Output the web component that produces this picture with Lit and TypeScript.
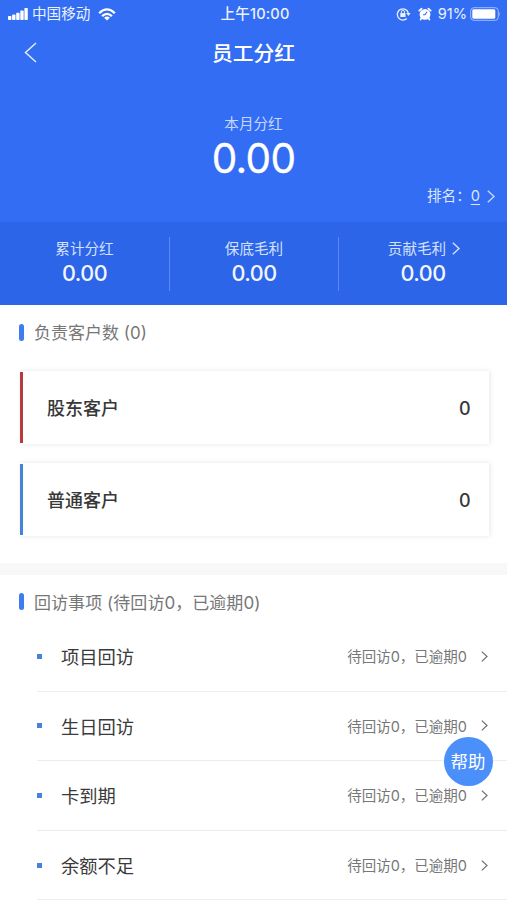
import { LitElement, html, css } from "lit";
import { customElement, property } from "lit/decorators.js";

@customElement("chevron-icon")
class ChevronIcon extends LitElement {
  static styles = css`
    :host { display: block; width: 8px; height: 13px; }
    .icon { display: block; width: 100%; height: 100%; fill: none; stroke: currentColor; stroke-width: 1.4; overflow: visible; }
  `;
  render() {
    return html`<svg class="icon" viewBox="0 0 8 13"><path d="M0.8 0.8 L7 6.5 L0.8 12.2" /></svg>`;
  }
}

@customElement("status-bar")
class StatusBar extends LitElement {
  static styles = css`
    :host { display: grid; grid-template-columns: 1fr auto 1fr; align-items: center; height: 27px; padding: 0 6px 0 8px; color: #eaf1ff; font-size: 14.6px; line-height: 27px; }
    .side { display: flex; align-items: center; }
    .right { justify-content: flex-end; }
    .signal { width: 20px; height: 12px; margin-right: 4px; }
    .wifi { width: 18px; height: 13px; margin-left: 8px; }
    .lock { width: 15px; height: 14px; margin-right: 7px; }
    .alarm { width: 14px; height: 14px; margin-right: 6px; }
    .battery { width: 31px; height: 14px; margin-left: 3px; }
    .time { padding: 1px 0 0 1px; font-weight: 500; letter-spacing: 0.15px; }
    .percent { font-size: 14.6px; }
  `;
  render() {
    return html`
      <div class="side">
        <svg class="signal" viewBox="0 0 20 12" fill="#fff">
          <rect x="0" y="8" width="3.4" height="4" rx="0.8" /><rect x="4.1" y="6.5" width="3.4" height="5.5" rx="0.8" />
          <rect x="8.2" y="4.7" width="3.4" height="7.3" rx="0.8" /><rect x="12.3" y="2.5" width="3.4" height="9.5" rx="0.8" />
          <rect x="16.4" y="0" width="3.4" height="12" rx="0.8" />
        </svg>
        <span>中国移动</span>
        <svg class="wifi" viewBox="0 0 18 13" fill="none" stroke="#fff" stroke-width="2.3">
          <path d="M1.2 5.2 Q9 -2.4 16.8 5.2" /><path d="M4.1 8.2 Q9 3.6 13.9 8.2" />
          <path d="M9 12.6 L6.1 9.8 Q9 7.2 11.9 9.8 Z" fill="#fff" stroke="none" />
        </svg>
      </div>
      <span class="time">上午10:00</span>
      <div class="side right">
        <svg class="lock" viewBox="0 0 15 14" fill="none" stroke="#eaf1ff" stroke-width="1.3">
          <path d="M10.8 11.5 A5.6 5.6 0 1 1 12.3 6" /><path d="M10.2 6 L14.6 6 L12.4 9 Z" fill="#eaf1ff" stroke="none" />
          <rect x="4.3" y="6.1" width="5.2" height="3.9" fill="#eaf1ff" stroke="none" /><path d="M5.3 6.5 V5 a1.6 1.6 0 0 1 3.2 0 V6.5" stroke-width="1" />
        </svg>
        <svg class="alarm" viewBox="0 0 14 14">
          <circle cx="7" cy="7.4" r="5.4" fill="#fff" />
          <path d="M1.3 3.6 L3.6 1.6 M12.7 3.6 L10.4 1.6 M3.5 11.3 L2.6 12.6 M10.5 11.3 L11.4 12.6" stroke="#fff" stroke-width="1.7" stroke-linecap="round" />
          <path d="M9 4.8 L7 7.8 L5 7.8" fill="none" stroke="#336df3" stroke-width="1.1" />
        </svg>
        <span class="percent">91%</span>
        <svg class="battery" viewBox="0 0 31 14">
          <rect x="0.7" y="0.7" width="27.6" height="12.6" rx="3.2" fill="none" stroke="#9fbdff" stroke-width="1" />
          <rect x="2.3" y="2.3" width="23" height="9.4" rx="1.4" fill="#fff" />
          <path d="M29.4 4.8 Q31 7 29.4 9.2 Z" fill="#9fbdff" />
        </svg>
      </div>`;
  }
}

@customElement("customer-card")
class CustomerCard extends LitElement {
  @property() label = "";
  @property() count = "0";
  @property() tone = "red";
  static styles = css`
    .card { display: flex; align-items: center; box-sizing: border-box; height: 73px; padding-right: 18.5px; background: #fff; box-shadow: 1px 0 5px rgba(0, 0, 0, 0.1); color: #383838; font-size: 18px; font-weight: 500; line-height: 26px; }
    .bar { width: 2.5px; height: 71px; margin-right: 24.5px; background: #b63c3c; }
    .bar.blue { background: #4583d8; }
    .label { flex: 1; padding-top: 3px; }
    .count { padding-top: 2px; font-size: 18px; }
  `;
  render() {
    return html`<div class="card"><i class="bar ${this.tone}"></i><span class="label">${this.label}</span><span class="count">${this.count}</span></div>`;
  }
}

@customElement("visit-row")
class VisitRow extends LitElement {
  @property() label = "";
  static styles = css`
    .row { display: flex; align-items: center; box-sizing: border-box; height: 69.6px; margin-left: 37px; padding-right: 19px; border-bottom: 1.5px solid #ededed; color: #777; font-size: 14.5px; line-height: 26px; }
    .dot { width: 5px; height: 5px; margin-right: 19px; background: #4583d8; }
    .label { flex: 1; padding-top: 2px; color: #3a3a3a; font-size: 18.3px; }
    .detail { padding-top: 2px; }
    .chevron { margin-left: 14px; width: 7px; height: 11px; color: #707070; }
  `;
  render() {
    return html`<div class="row"><i class="dot"></i><span class="label">${this.label}</span><span class="detail">待回访0，已逾期0</span><chevron-icon class="chevron"></chevron-icon></div>`;
  }
}

@customElement("app-root")
class AppRoot extends LitElement {
  static styles = css`
    :host { display: block; position: relative; width: 507px; height: 900px; overflow: hidden; background: #fff; font-family: Inter, "Noto Sans CJK SC", sans-serif; }
    .hero { display: flex; flex-direction: column; height: 222px; background: #336df3; color: #fff; }
    .nav { display: grid; grid-template-columns: 1fr auto 1fr; align-items: center; height: 50px; padding: 0 24px; }
    .back { width: 13px; height: 21px; fill: none; stroke: #e4edff; stroke-width: 1.5; }
    .title { padding-top: 3px; font-size: 20.8px; font-weight: 500; line-height: 47px; }
    .caption { margin-top: 36px; text-align: center; font-size: 14.6px; line-height: 22px; color: #c6d8ff; }
    .amount { text-align: center; font-size: 40.5px; line-height: 48px; letter-spacing: -0.7px; font-weight: 400; -webkit-text-stroke: 0.3px #fff; }
    .rank { display: flex; justify-content: flex-end; align-items: center; margin-top: 2px; padding-right: 12px; font-size: 14.6px; line-height: 22px; color: #dbe6ff; }
    .rank-value { text-decoration: underline; text-underline-offset: 3px; }
    .rank-chevron { margin-left: 7px; color: #c6d8ff; }
    .stats { display: grid; grid-template-columns: repeat(3, 1fr); align-items: center; height: 83px; background: #2c65e7; color: #d3e1ff; }
    .stat { display: flex; flex-direction: column; align-items: center; box-sizing: border-box; height: 54px; font-size: 14.6px; }
    .stat + .stat { border-left: 1px solid #5989f3; }
    .stat-name { display: flex; align-items: center; padding-top: 1px; line-height: 22px; }
    .stat-name.linked { margin-left: 2px; }
    .stat-chevron { margin-left: 6px; }
    .stat-value { color: #f2f6ff; font-size: 21.6px; font-weight: 500; line-height: 26px; letter-spacing: -0.5px; }
    .heading { display: flex; align-items: center; height: 54px; padding-left: 19px; font-size: 17px; color: #777; }
    .heading-text { margin-top: -2px; }
    .heading.visits { height: 43px; padding-top: 4px; }
    .mark { width: 5px; height: 17px; margin-right: 10px; border-radius: 2.5px; background: #3e7df0; }
    .cards { display: flex; flex-direction: column; gap: 19px; height: 191.5px; padding: 12px 18px 0 20px; box-sizing: border-box; }
    .band { height: 12.5px; background: #f8f8f8; margin-top: 12px; }
    .visits .mark { margin-top: 2px; }
    .visits .heading-text { margin-top: 2px; letter-spacing: 0.05px; }
    .help { position: absolute; left: 443.5px; top: 736.5px; width: 49px; height: 49px; border-radius: 50%; background: #4b8ffa; color: #fff; text-align: center; font-size: 17.4px; line-height: 50px; white-space: nowrap; }
  `;
  render() {
    const chevron = (cls: string) => html`<chevron-icon class=${cls}></chevron-icon>`;
    return html`
      <header class="hero">
        <status-bar></status-bar>
        <nav class="nav">
          <svg class="back" viewBox="0 0 13 21"><path d="M12 1 L1.5 10.5 L12 20" /></svg>
          <span class="title">员工分红</span>
        </nav>
        <div class="caption">本月分红</div>
        <div class="amount">0.00</div>
        <div class="rank"><span>排名：</span><span class="rank-value">0</span>${chevron("rank-chevron")}</div>
      </header>
      <section class="stats">
        <div class="stat"><span class="stat-name">累计分红</span><span class="stat-value">0.00</span></div>
        <div class="stat"><span class="stat-name">保底毛利</span><span class="stat-value">0.00</span></div>
        <div class="stat"><span class="stat-name linked">贡献毛利${chevron("stat-chevron")}</span><span class="stat-value">0.00</span></div>
      </section>
      <div class="heading"><i class="mark"></i><span class="heading-text">负责客户数 (0)</span></div>
      <section class="cards">
        <customer-card label="股东客户" tone="red"></customer-card>
        <customer-card label="普通客户" tone="blue"></customer-card>
      </section>
      <div class="band"></div>
      <div class="heading visits"><i class="mark"></i><span class="heading-text">回访事项 (待回访0，已逾期0)</span></div>
      ${["项目回访", "生日回访", "卡到期", "余额不足"].map((label) => html`<visit-row label=${label}></visit-row>`)}
      <div class="help">帮助</div>`;
  }
}
